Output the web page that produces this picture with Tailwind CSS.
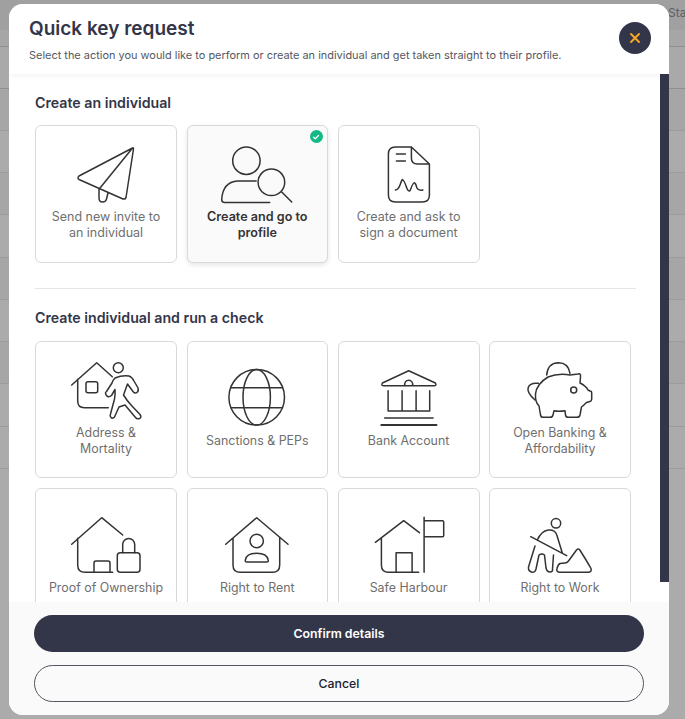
<!DOCTYPE html>
<html>
<head>
<meta charset="utf-8">
<script src="https://cdn.jsdelivr.net/npm/@tailwindcss/browser@4"></script>
</head>
<body class="font-['Inter',sans-serif]">
<div class="relative w-[685px] h-[719px] overflow-hidden bg-[#ababab]">
  <!-- page behind the dimmed overlay -->
  <div class="flex flex-col">
    <div class="h-[30px] bg-[#a0a0a0] flex justify-end items-start pt-[5px]"><span class="text-[12px] leading-[16px] text-[#5a5f66] w-[17px] overflow-hidden whitespace-nowrap">Status</span></div>
    <div class="h-[17px] bg-[#a6a6a6] border-b border-[#8f8f8f]"></div>
    <div class="h-[42px] bg-[#a9a9a9] border-b border-[#8f8f8f]"></div>
    <div class="h-[42px] bg-[#a6a6a6] border-b border-[#9c9c9c]"></div>
    <div class="h-[42px] bg-[#ababab] border-b border-[#9c9c9c]"></div>
    <div class="h-[42px] bg-[#a6a6a6] border-b border-[#9c9c9c]"></div>
    <div class="h-[43px] bg-[#ababab] border-b border-[#9c9c9c]"></div>
    <div class="h-[42px] bg-[#a6a6a6] border-b border-[#9c9c9c]"></div>
    <div class="h-[42px] bg-[#ababab] border-b border-[#9c9c9c]"></div>
    <div class="h-[42px] bg-[#a6a6a6] border-b border-[#9c9c9c]"></div>
    <div class="h-[43px] bg-[#ababab] border-b border-[#9c9c9c]"></div>
    <div class="h-[42px] bg-[#ababab] border-b border-[#9c9c9c]"></div>
  </div>

  <!-- modal -->
  <div class="absolute left-[9px] top-[4px] w-[660px] h-[711px] bg-white rounded-[14px] overflow-hidden flex flex-col">
    <header class="relative z-10 h-[70px] shrink-0 bg-white pl-[20px] pt-[13px] shadow-[0_2px_6px_rgba(0,0,0,0.05)]">
      <h1 class="text-[19px] leading-[24px] font-semibold text-[#333548]">Quick key request</h1>
      <p class="mt-[6px] text-[10.95px] leading-[16px] text-[#55575f]">Select the action you would like to perform or create an individual and get taken straight to their profile.</p>
      <button class="absolute right-[18px] top-[18px] w-[32px] h-[32px] rounded-full bg-[#333548] flex items-center justify-center">
        <svg width="12" height="12" viewBox="0 0 12 12" fill="none" stroke="#f5a623" stroke-width="2" stroke-linecap="round"><path d="M2 2l8 8M10 2l-8 8"/></svg>
      </button>
    </header>

    <div class="flex h-[528px] shrink-0 overflow-hidden">
      <div class="w-[651px] pl-[26px] pt-[19px]">
        <h2 class="text-[14.2px] leading-[20px] font-semibold text-[#333548]">Create an individual</h2>
        <div class="mt-[12px] grid grid-cols-[142px_141.4px_142px_141.6px] gap-x-[9.6px]">
          <!-- Send invite -->
          <div class="h-[138px] rounded-md border border-[#d9d9d9] bg-white pt-[18px] flex flex-col items-center">
            <svg class="overflow-visible" width="90" height="65" viewBox="61 144 90 65" fill="none" stroke="#333" stroke-width="1.5" stroke-linecap="round" stroke-linejoin="round"><path d="M132.500 148L79 176q-2 2 0 3.500L123 199q2.500.5 3-1.500L133.500 149q0-1.500-1-1zM132.500 148L100 188M99 189v9q0 4 3.500 4t4-3l1.500-6"/></svg>
            <div class="h-[32px] flex items-center justify-center text-center text-[12.5px] leading-[16px] text-[#6f6f6f]">Send new invite to<br>an individual</div>
          </div>
          <!-- Create and go to profile -->
          <div class="relative h-[138px] rounded-md border border-[#d9d9d9] bg-[#fafafa] shadow-[0_2px_5px_rgba(0,0,0,0.1)] pt-[18px] flex flex-col items-center">
            <svg class="overflow-visible" width="90" height="65" viewBox="212.300 144 90 65" fill="none" stroke="#333" stroke-width="1.5" stroke-linecap="round" stroke-linejoin="round"><circle cx="246.700" cy="160.700" r="13.700"/><path d="M256.500 181H238q-15 1-16 18.500q0 3 3 3H270"/><circle cx="271.700" cy="182.300" r="13.300"/><path d="M282 192l10 10"/></svg>
            <div class="h-[32px] flex items-center justify-center text-center text-[12.6px] leading-[16px] font-semibold text-[#333]">Create and go to<br>profile</div>
            <div class="absolute right-[4px] top-[4px] w-[13px] h-[13px] rounded-full bg-[#12b886] flex items-center justify-center">
              <svg width="8" height="8" viewBox="0 0 8 8" fill="none" stroke="#fff" stroke-width="1.300" stroke-linecap="round" stroke-linejoin="round"><path d="M1.500 4.200l1.800 1.600L6.500 2.500"/></svg>
            </div>
          </div>
          <!-- Sign a document -->
          <div class="h-[138px] rounded-md border border-[#d9d9d9] bg-white pt-[18px] flex flex-col items-center">
            <svg class="overflow-visible" width="90" height="65" viewBox="363.600 144 90 65" fill="none" stroke="#333" stroke-width="1.500" stroke-linecap="round" stroke-linejoin="round"><path d="M411 147H395q-7 0-7 7v41q0 7 7 7h27q7 0 7-7V164L411 147zM411 147v11q0 6 6 6h12M396 154h9M396 161h9M395 190q3 0 5-6t2.500-4q1.500 1 3.500 7t4 3q2-6 3.500-7t3 5q1.500 3 6 2"/></svg>
            <div class="h-[32px] flex items-center justify-center text-center text-[12.5px] leading-[16px] text-[#6f6f6f]">Create and ask to<br>sign a document</div>
          </div>
        </div>

        <div class="mt-[25px] h-px w-[601px] bg-[#e6e6e6]"></div>

        <h2 class="mt-[19px] text-[14.2px] leading-[20px] font-semibold text-[#333548]">Create individual and run a check</h2>
        <div class="mt-[13px] grid grid-cols-[142px_141.4px_142px_141.6px] gap-x-[9.6px] gap-y-[10px]">
          <!-- Address & Mortality -->
          <div class="h-[137px] rounded-md border border-[#d9d9d9] bg-white pt-[18px] flex flex-col items-center">
            <svg class="overflow-visible" width="90" height="65" viewBox="61 360 90 65" fill="none" stroke="#333" stroke-width="1.500" stroke-linecap="round" stroke-linejoin="round"><path d="M71.700 385L96.700 362.700L112.300 376.700M77.700 379.300V401q0 6.700 6.700 6.700H108.300"/><rect x="86" y="381.700" width="11.700" height="11" rx="2"/><circle cx="118.300" cy="367.700" r="5"/><path d="M115 378q7-3 14-2q3 1 5 5l4 7q1 3-1 4.500t-4-1l-5.500-7.500l-4 11q3 5 8 10.500l8.500 9q2 3-.5 4t-4-1L125 405l-6 2l-4.500 10q-2 2-3.500.5t-.5-3.500l4-15q1-5 .5-9.500l-3.500 6q-3 2.500-5 0t0-4L112 383q1-3 3-5z"/></svg>
            <div class="h-[32px] flex items-center justify-center text-center text-[12.4px] leading-[16px] text-[#6f6f6f]">Address &amp;<br>Mortality</div>
          </div>
          <!-- Sanctions -->
          <div class="h-[137px] rounded-md border border-[#d9d9d9] bg-white pt-[18px] flex flex-col items-center">
            <svg class="overflow-visible" width="90" height="65" viewBox="212.300 360 90 65" fill="none" stroke="#333" stroke-width="1.500"><circle cx="257" cy="397.300" r="27.800"/><ellipse cx="257" cy="397.300" rx="13.700" ry="27.800"/><path d="M231 387.700H283M231 407.700H283"/></svg>
            <div class="h-[32px] flex items-center justify-center text-center text-[12.4px] leading-[16px] text-[#6f6f6f]">Sanctions &amp; PEPs</div>
          </div>
          <!-- Bank -->
          <div class="h-[137px] rounded-md border border-[#d9d9d9] bg-white pt-[18px] flex flex-col items-center">
            <svg class="overflow-visible" width="90" height="65" viewBox="363.600 360 90 65" fill="none" stroke="#333" stroke-width="1.500" stroke-linecap="round" stroke-linejoin="round"><path d="M408.300 370.700L382 383q-1.500 2.700 1 2.700H434q2.500 0 1-2.700zM404.500 385.500a4 4 0 1 1 7.600 0M387.700 390.700V411H429.300V390.700M401.700 390.700V411M415.700 390.700V411M384.300 418H432.700"/><path d="M381 425H436" stroke-width="2.200"/></svg>
            <div class="h-[32px] flex items-center justify-center text-center text-[12.4px] leading-[16px] text-[#6f6f6f]">Bank Account</div>
          </div>
          <!-- Piggy -->
          <div class="h-[137px] rounded-md border border-[#d9d9d9] bg-white pt-[18px] flex flex-col items-center">
            <svg class="overflow-visible" width="90" height="65" viewBox="515 360 90 65" fill="none" stroke="#333" stroke-width="1.500" stroke-linecap="round" stroke-linejoin="round"><path d="M546.700 375q1-12 11.600-12.300q10 0 11.700 10.600M538.300 383.300q-8-1-10 4t6.700 12.700"/><path d="M548 377Q558 373 570 375L578 374Q581 373 580.500 377L580 383Q586 386 588 390L590 391Q591.700 391 591.700 393V399Q591.700 401 590 401.500L586.500 402.500Q583.500 405.500 581.500 407L580 415Q579.500 417.300 577 417.300H568Q566 417.300 565.500 415L565 410.700Q559 411.700 554 410.700L553 415Q552.500 417.300 550 417.300H543Q541 417.300 540.500 415L539 406Q535 402 535.500 394Q536.500 384 548 377Z"/><circle cx="573.700" cy="390" r="3"/></svg>
            <div class="h-[32px] flex items-center justify-center text-center text-[12.4px] leading-[16px] text-[#6f6f6f]">Open Banking &amp;<br>Affordability</div>
          </div>
          <!-- Proof of Ownership -->
          <div class="h-[137px] rounded-md border border-[#d9d9d9] bg-white pt-[18px] flex flex-col items-center">
            <svg class="overflow-visible" width="90" height="65" viewBox="61 507 90 65" fill="none" stroke="#333" stroke-width="1.500" stroke-linecap="round" stroke-linejoin="round"><path d="M71.700 544.300L101.700 517.700L122.700 535M77.700 538.300V565q0 7.300 7.300 7.300H112.700M94 572.300V563q0-2 2-2H108q2 0 2 2V572.300"/><rect x="117.300" y="552.700" width="22.700" height="19.600" rx="3"/><path d="M122.700 552.700V544.500a6 6 0 0 1 12 0V552.700"/></svg>
            <div class="h-[32px] flex items-center justify-center text-center text-[12.4px] leading-[16px] text-[#6f6f6f] whitespace-nowrap">Proof of Ownership</div>
          </div>
          <!-- Right to Rent -->
          <div class="h-[137px] rounded-md border border-[#d9d9d9] bg-white pt-[18px] flex flex-col items-center">
            <svg class="overflow-visible" width="90" height="65" viewBox="212.300 507 90 65" fill="none" stroke="#333" stroke-width="1.500" stroke-linecap="round" stroke-linejoin="round"><path d="M226 544.300L257 517.700L288.300 544.300M233.300 538.300V565q0 7.300 7.300 7.300H272.700q7.300 0 7.300-7.300V538.300"/><circle cx="257" cy="541" r="6.700"/><path d="M245.700 560q1-6.700 11.300-6.700T268.500 560q.5 2-1.500 2H247.200q-2 0-1.500-2z"/></svg>
            <div class="h-[32px] flex items-center justify-center text-center text-[12.4px] leading-[16px] text-[#6f6f6f]">Right to Rent</div>
          </div>
          <!-- Safe Harbour -->
          <div class="h-[137px] rounded-md border border-[#d9d9d9] bg-white pt-[18px] flex flex-col items-center">
            <svg class="overflow-visible" width="90" height="65" viewBox="363.600 507 90 65" fill="none" stroke="#333" stroke-width="1.500" stroke-linecap="round" stroke-linejoin="round"><path d="M375 542.300L403.300 520.700L419 532.700M381 538.300V565q0 7.300 7.300 7.300H418.300M395.700 572.300V552.700H411.700V572.300M423.700 517.300V572.300M423.700 520.700H442q1.300 0 1.300 1.300V535.400q0 1.300-1.300 1.300H423.700"/></svg>
            <div class="h-[32px] flex items-center justify-center text-center text-[12.4px] leading-[16px] text-[#6f6f6f]">Safe Harbour</div>
          </div>
          <!-- Right to Work -->
          <div class="h-[137px] rounded-md border border-[#d9d9d9] bg-white pt-[18px] flex flex-col items-center">
            <svg class="overflow-visible" width="90" height="65" viewBox="515 507 90 65" fill="none" stroke="#333" stroke-width="1.500" stroke-linecap="round" stroke-linejoin="round"><circle cx="556" cy="523.300" r="4.700"/><path d="M530.700 536.700L566.700 555.700M537.300 540q4-9 11-10q7-.5 8.500 5l5.500 18M535 546l-6.500 21q-.5 4 3 5t4.500-3l3-14q3-2 5.500 0l1.500 13q1 4 4 4t2.500-3l1-14M560 563.500l5-.5q2 0 3.500-2l8-11q1.500-1.500 3-.5q7 11 11.500 19q1 3-2 3.800H559q-3-.8-2-3.800q1-4 3-5z"/></svg>
            <div class="h-[32px] flex items-center justify-center text-center text-[12.4px] leading-[16px] text-[#6f6f6f]">Right to Work</div>
          </div>
        </div>
      </div>
      <div class="w-[9px] shrink-0"><div class="h-[508px] bg-[#333548]"></div></div>
    </div>

    <footer class="relative z-10 flex-1 bg-[#fafafa] px-[25px] pt-[13px] flex flex-col gap-[13px]">
      <button class="h-[37px] pt-px rounded-full bg-[#333548] text-white text-[12.3px] font-semibold">Confirm details</button>
      <button class="h-[37px] pt-px rounded-full border border-[#55565f] text-[#20212f] text-[12.3px] font-medium">Cancel</button>
    </footer>
  </div>
</div>
</body>
</html>
